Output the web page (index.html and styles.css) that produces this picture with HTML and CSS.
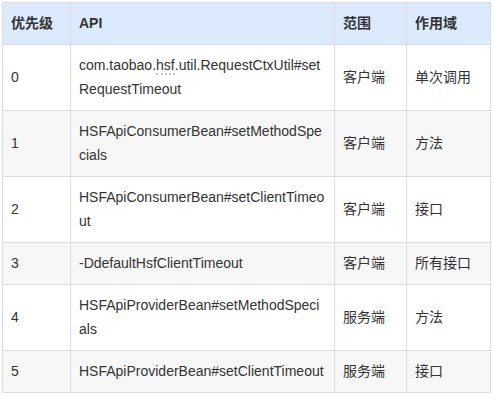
FILE: index.html
```html
<!DOCTYPE html>
<html lang="zh-CN">
<head>
  <meta charset="UTF-8">
  <title>HSF 超时配置优先级</title>
  <link rel="stylesheet" href="styles.css">
</head>
<body>
  <table class="priority-table">
    <colgroup>
      <col class="col-level">
      <col class="col-api">
      <col class="col-scope">
      <col class="col-domain">
    </colgroup>
    <thead>
      <tr>
        <th>优先级</th>
        <th>API</th>
        <th>范围</th>
        <th>作用域</th>
      </tr>
    </thead>
    <tbody>
      <tr>
        <td>0</td>
        <td class="api">com.taobao.<span class="spell">hsf</span>.util.RequestCtxUtil#setRequestTimeout</td>
        <td>客户端</td>
        <td>单次调用</td>
      </tr>
      <tr>
        <td>1</td>
        <td class="api">HSFApiConsumerBean#setMethodSpecials</td>
        <td>客户端</td>
        <td>方法</td>
      </tr>
      <tr>
        <td>2</td>
        <td class="api">HSFApiConsumerBean#setClientTimeout</td>
        <td>客户端</td>
        <td>接口</td>
      </tr>
      <tr>
        <td>3</td>
        <td class="api">-DdefaultHsfClientTimeout</td>
        <td>客户端</td>
        <td>所有接口</td>
      </tr>
      <tr>
        <td>4</td>
        <td class="api">HSFApiProviderBean#setMethodSpecials</td>
        <td>服务端</td>
        <td>方法</td>
      </tr>
      <tr>
        <td>5</td>
        <td class="api">HSFApiProviderBean#setClientTimeout</td>
        <td>服务端</td>
        <td>接口</td>
      </tr>
    </tbody>
  </table>
</body>
</html>
```

FILE: styles.css
```css
body {
    margin: 0;
    padding: 2px;
    font-family: "Liberation Sans", Arial, "Noto Sans CJK SC", sans-serif;
    font-size: 14px;
    color: #333;
    background: white;
}
.priority-table {
    border-collapse: collapse;
    table-layout: fixed;
    width: 488px;
}
.col-level {
    width: 68px;
}
.col-api {
    width: 264px;
}
.col-scope {
    width: 72px;
}
.col-domain {
    width: 84px;
}
th, td {
    border: 1px solid #dcdcdc;
    padding: 8px 8px 9px;
    line-height: 24px;
    text-align: left;
    vertical-align: middle;
}
th {
    background-color: #dbeafc;
    font-weight: bold;
}
tbody tr:nth-child(even) td {
    background-color: #f7f7f7;
}
.api {
    word-break: break-all;
}
.spell {
    border-bottom: 2px dotted #c2b9f4;
}
```
